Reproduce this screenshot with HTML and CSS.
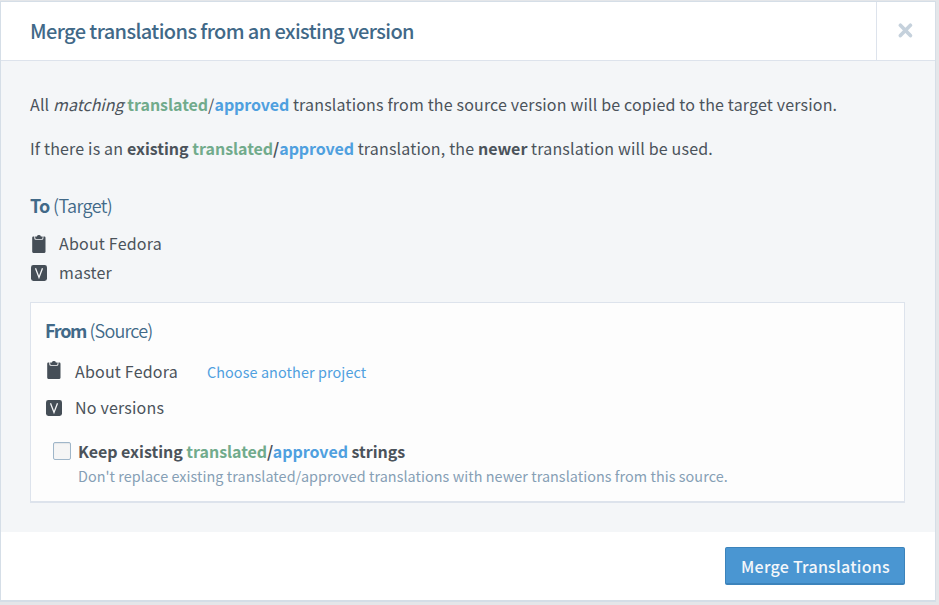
FILE: index.html
```html
<!DOCTYPE html>
<html lang="en">
<head>
<meta charset="utf-8">
<title>Merge translations</title>
<link rel="stylesheet" href="styles.css">
</head>
<body>
<svg class="defs" width="0" height="0" aria-hidden="true">
  <symbol id="clipboard" viewBox="0 0 16 18">
    <path fill="#454e57" d="M2.3 1.6h1v1.7q0 1.5 1.5 1.5h6.1q1.5 0 1.5-1.5V1.6h1q1.1 0 1.1 1.1v14.1q0 1.1-1.1 1.1H2.3q-1.1 0-1.1-1.1V2.7q0-1.1 1.1-1.1z"/>
    <path fill="#454e57" d="M4.2 1.4h1.7Q6.2 0 7.9 0t2 1.4h1.7v1.3q0 1.2-1.2 1.2h-5q-1.2 0-1.2-1.2z"/>
  </symbol>
  <symbol id="version" viewBox="0 0 16 16">
    <rect width="16" height="16" rx="2.4" fill="#454e57"/>
    <path fill="none" stroke="#f4f5f7" stroke-width="1.3" d="M4.5 3.2 8 12.4l3.5-9.2"/>
  </symbol>
</svg>
<div class="modal">
  <header class="modal-header">
    <h1 class="title">Merge translations from an existing version</h1>
    <button class="close" aria-label="Close"><svg width="15" height="15" viewBox="0 0 15 15"><path d="M2.4 2.2l10 10.4M12.4 2.2l-10 10.4" stroke="#c5d1dc" stroke-width="3.6" stroke-linecap="round"/></svg></button>
  </header>
  <main class="modal-body">
    <p class="intro line-a">All <em>matching</em> <b class="translated">translated</b>/<b class="approved">approved</b> translations from the source version will be copied to the target version.</p>
    <p class="intro line-b">If there is an <b>existing</b> <b class="translated">translated</b><b>/</b><b class="approved">approved</b> translation, the <b>newer</b> translation will be used.</p>
    <section class="target">
      <h2 class="heading"><b>To</b> (Target)</h2>
      <div class="item"><svg class="clip"><use href="#clipboard"/></svg><span>About Fedora</span></div>
      <div class="item"><svg class="ver"><use href="#version"/></svg><span>master</span></div>
    </section>
    <section class="source">
      <h2 class="heading"><b>From</b> (Source)</h2>
      <div class="item"><svg class="clip"><use href="#clipboard"/></svg><span class="project">About Fedora</span><a class="choose">Choose another project</a></div>
      <div class="item"><svg class="ver"><use href="#version"/></svg><span>No versions</span></div>
      <div class="option">
        <span class="checkbox"></span>
        <div>
          <div class="label"><b>Keep existing <span class="translated">translated</span>/<span class="approved">approved</span> strings</b></div>
          <div class="hint">Don't replace existing translated/approved translations with newer translations from this source.</div>
        </div>
      </div>
    </section>
  </main>
  <footer class="modal-footer"><button class="primary">Merge Translations</button></footer>
</div>
</body>
</html>
```
FILE: styles.css
```css
* { box-sizing: border-box; }
body {
  margin: 0;
  height: 605px;
  padding-top: 1px;
  overflow: hidden;
  background: #e4e6e9;
  color: #4b535b;
  font-family: "Noto Sans CJK SC", "Noto Sans", sans-serif;
  font-size: 16px;
}
.defs { position: absolute; }
h1, h2, p { margin: 0; }
b { font-weight: 700; letter-spacing: -0.03px; }
.modal {
  display: flex;
  flex-direction: column;
  width: 936px;
  height: 601px;
  border: 1px solid #d5dee7;
  border-bottom-width: 2px;
  background: #fff;
}
.modal-header {
  display: flex;
  height: 59px;
  border-bottom: 1px solid #dde3ec;
}
.title {
  flex: 1;
  padding-left: 29px;
  color: #416988;
  font-size: 20px;
  font-weight: 500;
  line-height: 58px;
  letter-spacing: -0.6px;
}
.close {
  display: flex;
  align-items: center;
  justify-content: center;
  width: 59px;
  padding: 0 1px 1px 0;
  border: 0;
  border-left: 1px solid #dde3ec;
  background: none;
}
.modal-body {
  height: 471px;
  padding: 28px 30px 0 29px;
  background: #f4f6f8;
}
.intro {
  height: 44px;
  line-height: 30px;
  letter-spacing: 0.17px;
  white-space: nowrap;
}
.intro em { letter-spacing: 0; }
.intro .approved { letter-spacing: -0.1px; }
.translated { color: #71ab8c; }
.approved { color: #4fa0df; }
.heading {
  color: #416988;
  font-size: 18px;
  font-weight: 350;
  line-height: 28px;
  letter-spacing: -0.7px;
}
.heading b { letter-spacing: -0.7px; }
.target { height: 125px; padding-top: 14px; }
.item {
  display: flex;
  align-items: center;
  height: 29px;
  letter-spacing: 0.2px;
}
.item svg { width: 16px; margin: 0 12px 0 1px; }
.clip { height: 18px; }
.item .ver { height: 16px; position: relative; top: 1px; }
.item .clip { position: relative; top: 1px; }
.target .heading { margin-bottom: 9px; letter-spacing: -0.6px; }
.source {
  height: 201px;
  padding: 13px 14px;
  border: 1px solid #dde3ec;
  border-bottom-width: 2px;
  background: #fdfdfd;
}
.source .heading { margin-bottom: 9px; letter-spacing: -0.8px; }
.source .heading b { letter-spacing: -1.3px; }
.source .item { height: 36px; }
.source .item svg { margin-right: 13px; }
.source .item .clip { top: -1px; }
.choose {
  margin-left: 29px;
  color: #4fa0df;
  font-size: 14.4px;
  letter-spacing: 0.1px;
}
.option {
  display: flex;
  padding: 12px 0 0 8px;
}
.checkbox {
  width: 18px;
  height: 18px;
  margin: 5px 7px 0 0;
  border: 1px solid #9fb6c9;
  border-radius: 2px;
  background: #f5f5f5;
  box-shadow: inset 0 1px 1px #e4e6e8;
}
.label { line-height: 28px; white-space: nowrap; }
.hint {
  color: #869fb5;
  font-size: 14.4px;
  line-height: 22px;
  letter-spacing: 0.05px;
  white-space: nowrap;
}
.modal-footer {
  display: flex;
  justify-content: flex-end;
  flex: 1;
  padding: 15px 30px 0 0;
}
.primary {
  width: 180px;
  height: 38px;
  padding: 0 0 0 1px;
  border: 1px solid #3c83bb;
  border-bottom-width: 2px;
  border-radius: 2px;
  background: #4a96d2;
  color: #f4f7fa;
  font: 500 16px/34px "Noto Sans CJK SC", sans-serif;
  letter-spacing: 0.25px;
}
```
